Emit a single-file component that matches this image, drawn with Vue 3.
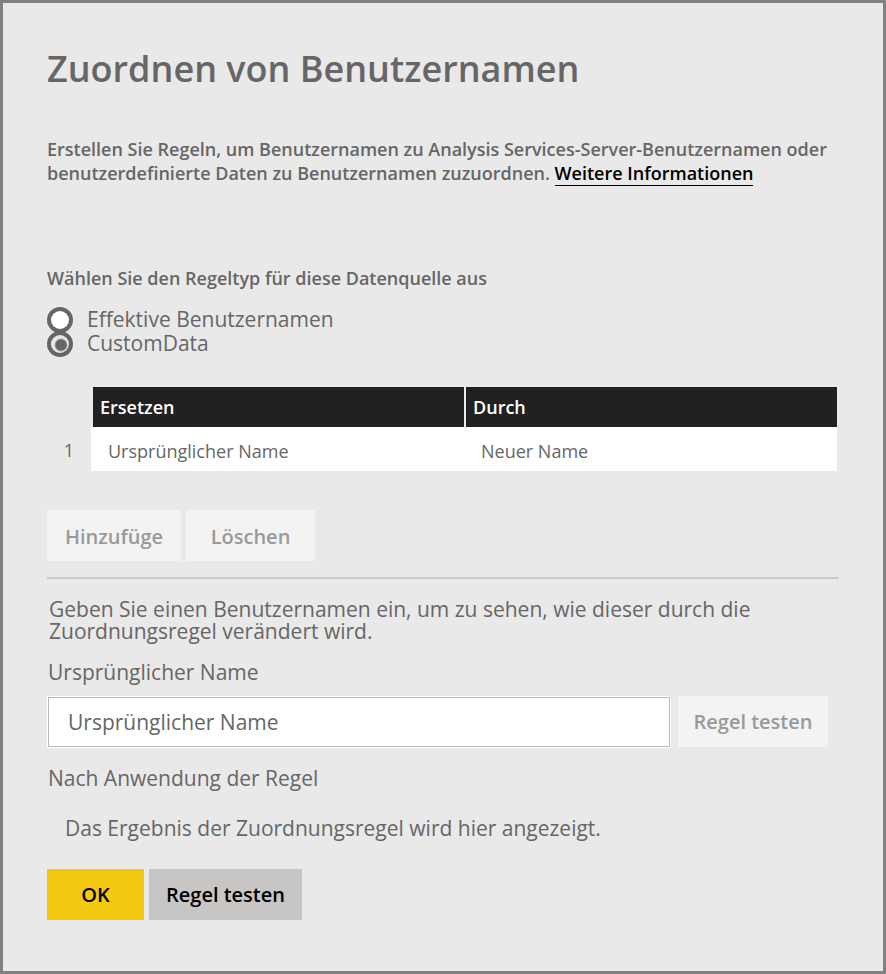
<script setup>
import { ref } from 'vue'

const ruleType = ref('custom')
const rules = ref([{ from: 'Ursprünglicher Name', to: 'Neuer Name' }])
const original = ref('Ursprünglicher Name')
</script>

<template>
  <main class="dialog">
    <h1>Zuordnen von Benutzernamen</h1>
    <p class="intro">
      Erstellen Sie Regeln, um Benutzernamen zu Analysis Services-Server-Benutzernamen oder
      benutzerdefinierte Daten zu Benutzernamen zuzuordnen.
      <a href="#">Weitere Informationen</a>
    </p>

    <fieldset class="types">
      <legend>Wählen Sie den Regeltyp für diese Datenquelle aus</legend>
      <label class="option">
        <input v-model="ruleType" type="radio" name="type" value="effective" />
        <span>Effektive Benutzernamen</span>
      </label>
      <label class="option">
        <input v-model="ruleType" type="radio" name="type" value="custom" />
        <span>CustomData</span>
      </label>
    </fieldset>

    <table class="rules">
      <thead>
        <tr>
          <td class="index"></td>
          <th scope="col">Ersetzen</th>
          <th scope="col">Durch</th>
        </tr>
      </thead>
      <tbody>
        <tr v-for="(rule, i) in rules" :key="i">
          <td class="index">{{ i + 1 }}</td>
          <td class="cell">{{ rule.from }}</td>
          <td class="cell">{{ rule.to }}</td>
        </tr>
      </tbody>
    </table>

    <div class="actions">
      <button class="btn add" type="button" disabled>Hinzufüge</button>
      <button class="btn remove" type="button" disabled>Löschen</button>
    </div>

    <section class="test">
      <p class="hint">
        Geben Sie einen Benutzernamen ein, um zu sehen, wie dieser durch die Zuordnungsregel
        verändert wird.
      </p>
      <label class="caption" for="original">Ursprünglicher Name</label>
      <div class="try">
        <input id="original" v-model="original" class="field" type="text" />
        <button class="btn run" type="button" disabled>Regel testen</button>
      </div>
      <p class="caption">Nach Anwendung der Regel</p>
      <p class="result">Das Ergebnis der Zuordnungsregel wird hier angezeigt.</p>
    </section>

    <footer class="actions">
      <button class="btn ok" type="button">OK</button>
      <button class="btn second" type="button">Regel testen</button>
    </footer>
  </main>
</template>

<style>
body {
  background: #e9e9e9;
}
</style>

<style scoped>
.dialog {
  box-sizing: border-box;
  min-height: 100vh;
  padding: 40px 44px 48px;
  border: 3px solid #808080;
  background: #e9e9e9;
  color: #666;
  font-family: "Open Sans", "Noto Sans", sans-serif;
  font-size: 21px;
}

h1,
p {
  margin: 0;
}

h1 {
  font-size: 36px;
  font-weight: 600;
  line-height: 52px;
}

.intro {
  max-width: 784px;
  margin-top: 42px;
  font-size: 18px;
  font-weight: 600;
  line-height: 24px;
}

.intro a {
  border-bottom: 1px solid #000;
  color: #000;
  text-decoration: none;
}

.types {
  margin: 81px 0 0;
  padding: 0;
  border: 0;
}

legend {
  padding: 0;
  margin-bottom: 18px;
  font-size: 18px;
  font-weight: 600;
  line-height: 24px;
}

.option {
  display: flex;
  align-items: center;
  gap: 14px;
  height: 24px;
  line-height: 24px;
}

.option span {
  margin-top: -2px;
}

.option input {
  appearance: none;
  box-sizing: border-box;
  flex: none;
  width: 26px;
  height: 26px;
  margin: 0;
  border: 4px solid #666;
  border-radius: 50%;
  background: #fff;
}

.option input:checked {
  background: radial-gradient(circle at 10px 10px, #666 5px, #e9e9e9 7px);
}

.rules {
  width: calc(100% - 2px);
  margin-top: 31px;
  border-collapse: separate;
  border-spacing: 0;
  table-layout: fixed;
  text-align: left;
}

.rules th {
  height: 40px;
  padding: 0 7px;
  border-left: 2px solid #e9e9e9;
  background: #212121;
  color: #fff;
  font-size: 18px;
  font-weight: 600;
}

.index {
  width: 44px;
  padding: 2px 0 0;
  text-align: center;
  font-size: 18px;
}

.cell {
  height: 44px;
  padding: 4px 17px 0;
  box-sizing: border-box;
  background: #fff;
  font-size: 18px;
}

.actions {
  display: flex;
  gap: 5px;
  margin-top: 39px;
}

.btn {
  height: 51px;
  padding: 0;
  border: 0;
  font: 600 20px "Open Sans", "Noto Sans", sans-serif;
  color: #000;
}

.btn:disabled {
  background: #f3f3f3;
  color: #999;
}

.add,
.remove {
  padding-top: 2px;
}

.add {
  width: 134px;
}

.remove {
  width: 129px;
}

.test {
  margin-top: 16px;
  padding-top: 19px;
  border-top: 2px solid #c8c8c8;
}

.hint {
  max-width: 740px;
  padding-left: 2px;
  line-height: 22px;
}

.caption {
  display: block;
  margin-top: 16px;
  padding-left: 1px;
  line-height: 28px;
}

.try {
  display: flex;
  gap: 7px;
  margin-top: 10px;
  padding-right: 11px;
}

.field {
  box-sizing: border-box;
  flex: 1;
  min-width: 0;
  height: 50px;
  margin: 1px;
  padding: 0 19px 1px;
  border: 1px solid #bababa;
  outline: 1px solid #fff;
  background: #fff;
  color: #666;
  font: 21px "Open Sans", "Noto Sans", sans-serif;
}

.run {
  width: 150px;
}

.result {
  margin-top: 22px;
  padding-left: 18px;
  line-height: 28px;
}

footer.actions {
  margin-top: 27px;
}

.ok {
  width: 97px;
  background: #f2c811;
}

.second {
  width: 153px;
  background: #c8c6c4;
}
</style>
